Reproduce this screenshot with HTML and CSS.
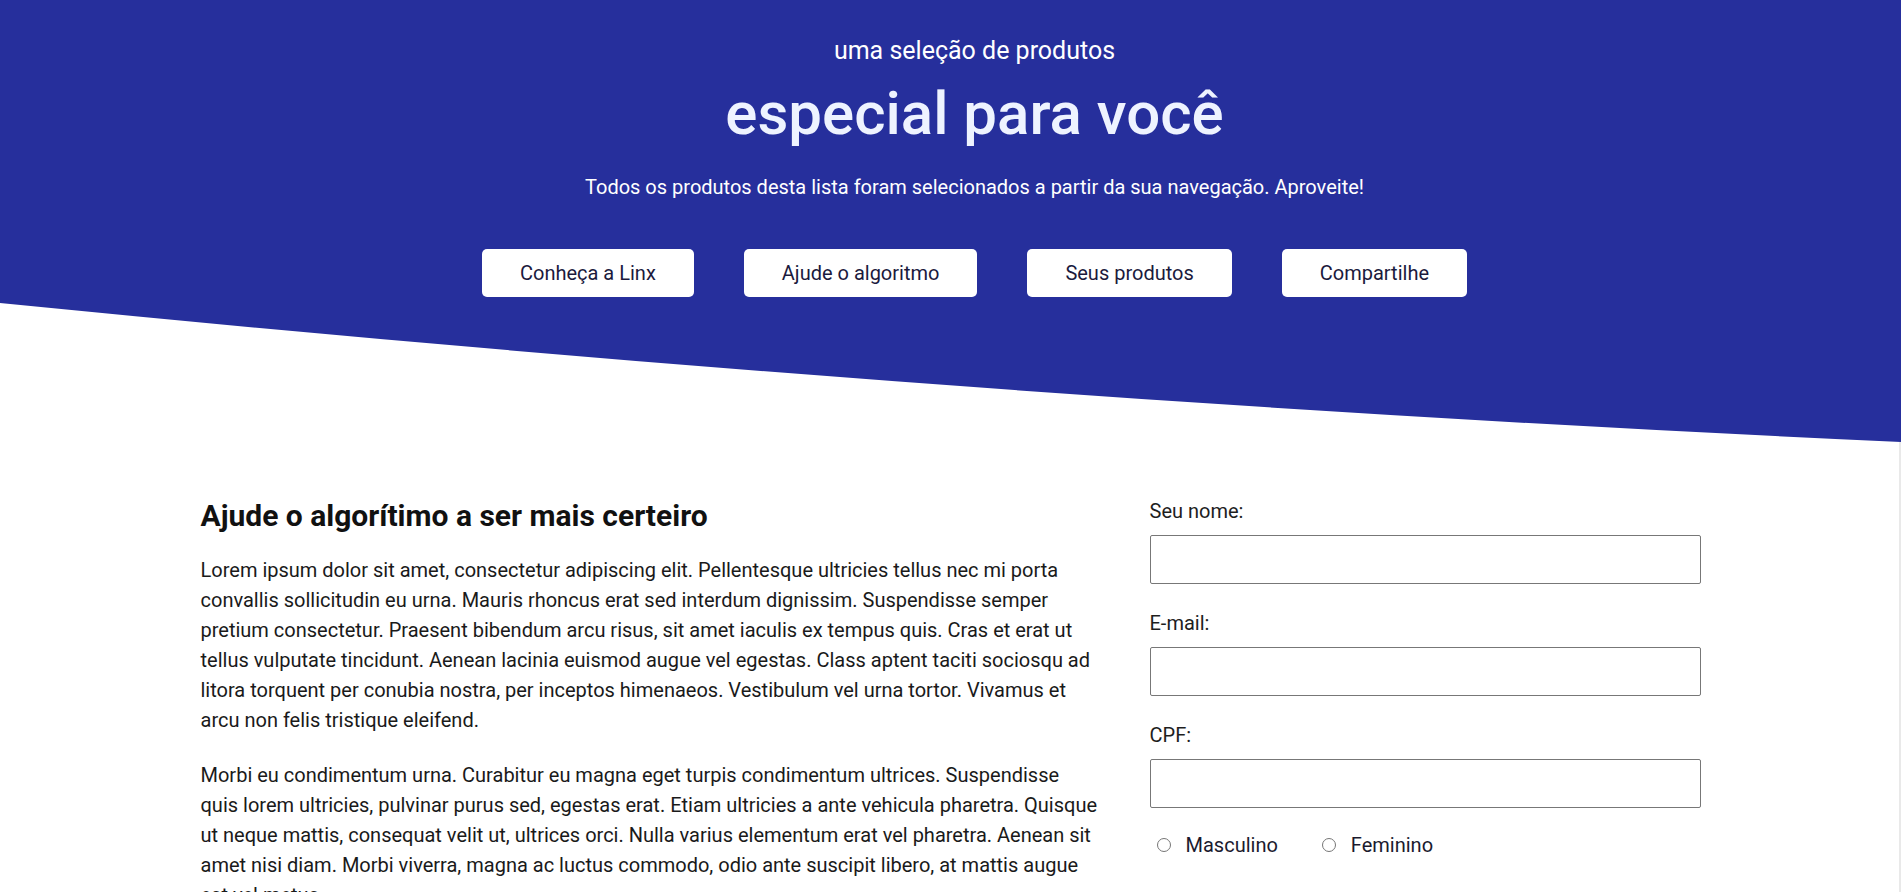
FILE: index.html
```html
<!DOCTYPE html>
<html lang="pt-BR">
<head>
<meta charset="utf-8">
<title>Especial para você</title>
<link rel="stylesheet" href="styles.css">
</head>
<body>
<header class="hero">
  <div class="hero-inner">
    <p class="kicker">uma seleção de produtos</p>
    <h1 class="title">especial para você</h1>
    <p class="lead">Todos os produtos desta lista foram selecionados a partir da sua navegação. Aproveite!</p>
    <nav class="actions">
      <a class="btn" href="#">Conheça a Linx</a>
      <a class="btn" href="#">Ajude o algoritmo</a>
      <a class="btn" href="#">Seus produtos</a>
      <a class="btn" href="#">Compartilhe</a>
    </nav>
  </div>
</header>
<main class="content">
  <section class="text-col">
    <h2 class="section-title">Ajude o algorítimo a ser mais certeiro</h2>
    <p class="copy">Lorem ipsum dolor sit amet, consectetur adipiscing elit. Pellentesque ultricies tellus nec mi porta convallis sollicitudin eu urna. Mauris rhoncus erat sed interdum dignissim. Suspendisse semper pretium consectetur. Praesent bibendum arcu risus, sit amet iaculis ex tempus quis. Cras et erat ut tellus vulputate tincidunt. Aenean lacinia euismod augue vel egestas. Class aptent taciti sociosqu ad litora torquent per conubia nostra, per inceptos himenaeos. Vestibulum vel urna tortor. Vivamus et arcu non felis tristique eleifend.</p>
    <p class="copy">Morbi eu condimentum urna. Curabitur eu magna eget turpis condimentum ultrices. Suspendisse quis lorem ultricies, pulvinar purus sed, egestas erat. Etiam ultricies a ante vehicula pharetra. Quisque ut neque mattis, consequat velit ut, ultrices orci. Nulla varius elementum erat vel pharetra. Aenean sit amet nisi diam. Morbi viverra, magna ac luctus commodo, odio ante suscipit libero, at mattis augue est vel metus.</p>
  </section>
  <form class="form-col">
    <div class="field">
      <label class="field-label" for="nome">Seu nome:</label>
      <input class="field-input" id="nome" type="text">
    </div>
    <div class="field">
      <label class="field-label" for="email">E-mail:</label>
      <input class="field-input" id="email" type="email">
    </div>
    <div class="field">
      <label class="field-label" for="cpf">CPF:</label>
      <input class="field-input" id="cpf" type="text">
    </div>
    <div class="radios">
      <label class="radio"><input class="radio-input" type="radio" name="sexo"> Masculino</label>
      <label class="radio"><input class="radio-input" type="radio" name="sexo"> Feminino</label>
    </div>
  </form>
</main>
</body>
</html>
```
FILE: styles.css
```css
* { box-sizing: border-box; }
html, body { margin: 0; padding: 0; }
body {
  font-family: Roboto, "Liberation Sans", Arial, sans-serif;
  background: #ffffff;
  color: #141414;
  overflow-x: hidden;
  min-height: 100vh;
  box-shadow: inset -2px 0 0 #e9e9e9;
}
.hero {
  height: 443px;
  background: #262f9c;
  clip-path: path('M0 0 H1901 V442 Q973 400 0 303 Z');
  padding-top: 36px;
  text-align: center;
  color: #ffffff;
}
.hero-inner {
  padding-left: 48px;
}
.kicker {
  margin: 0;
  font-size: 25px;
  line-height: 30px;
  font-weight: 400;
}
.title {
  margin: 16px 0 0;
  font-size: 60px;
  line-height: 64px;
  font-weight: 500;
  color: #eef3ff;
}
.lead {
  margin: 29px 0 0;
  font-size: 20px;
  line-height: 24px;
}
.actions {
  margin-top: 50px;
  display: flex;
  justify-content: center;
  gap: 50px;
}
.btn {
  display: flex;
  align-items: center;
  height: 48px;
  padding: 0 38px;
  background: #ffffff;
  border-radius: 5px;
  color: #1b1a3d;
  text-decoration: none;
  font-size: 20px;
}
.content {
  width: 1500px;
  margin: 0 auto;
  padding-top: 56px;
  display: grid;
  grid-template-columns: 900px 551px;
  column-gap: 49px;
}
.section-title {
  margin: 0 0 22px;
  font-size: 30px;
  line-height: 34px;
  font-weight: 700;
  color: #111111;
}
.copy {
  margin: 0 0 25px;
  font-size: 20px;
  line-height: 30px;
  color: #1a1a1a;
}
.form-col {
  margin: 0;
}
.field {
  display: flex;
  flex-direction: column;
  margin-bottom: 27px;
}
.field-label {
  font-size: 20px;
  line-height: 24px;
  margin-bottom: 12px;
  color: #1e1e1e;
}
.field-input {
  height: 49px;
  border: 1px solid #777777;
  border-radius: 2px;
  background: #ffffff;
  font: inherit;
  padding: 0 10px;
}
.radios {
  display: flex;
  gap: 44px;
  padding-left: 7px;
  margin-top: -2px;
}
.radio {
  display: flex;
  align-items: center;
  gap: 15px;
  font-size: 20px;
  line-height: 24px;
  color: #1b1a2e;
}
.radio-input {
  appearance: none;
  -webkit-appearance: none;
  width: 14px;
  height: 14px;
  margin: 0;
  border: 1px solid #767676;
  border-radius: 50%;
  background: #ffffff;
}
```
